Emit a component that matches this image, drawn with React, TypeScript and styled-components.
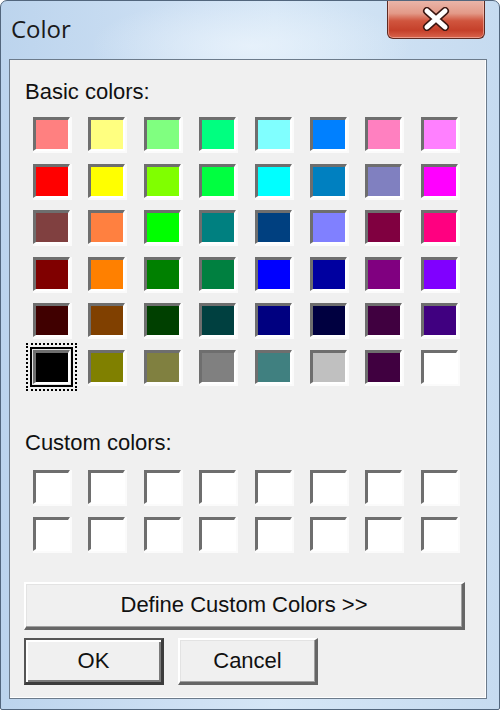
import styled, { createGlobalStyle } from 'styled-components';

const GlobalStyle = createGlobalStyle`
  html, body {
    margin: 0;
    padding: 0;
    background: #ffffff;
  }
`;

const BASIC_COLORS = [
  '#FF8080', '#FFFF80', '#80FF80', '#00FF80', '#80FFFF', '#0080FF', '#FF80C0', '#FF80FF',
  '#FF0000', '#FFFF00', '#80FF00', '#00FF40', '#00FFFF', '#0080C0', '#8080C0', '#FF00FF',
  '#804040', '#FF8040', '#00FF00', '#008080', '#004080', '#8080FF', '#800040', '#FF0080',
  '#800000', '#FF8000', '#008000', '#008040', '#0000FF', '#0000A0', '#800080', '#8000FF',
  '#400000', '#804000', '#004000', '#004040', '#000080', '#000040', '#400040', '#400080',
  '#000000', '#808000', '#808040', '#808080', '#408080', '#C0C0C0', '#400040', '#FFFFFF',
];

const SELECTED_INDEX = 40;

const Window = styled.div`
  box-sizing: border-box;
  width: 500px;
  height: 710px;
  display: flex;
  flex-direction: column;
  border: 1px solid #52667d;
  border-radius: 7px 7px 2px 2px;
  background:
    radial-gradient(ellipse 160px 50px at 250px 45px, rgba(235, 244, 252, 0.8), rgba(235, 244, 252, 0) 100%),
    linear-gradient(90deg, #bcd4ed 0%, #cfe1f4 40%, #d5e6f6 55%, #c6dbf0 100%);
  overflow: hidden;
`;

const TitleBar = styled.div`
  height: 58px;
  display: flex;
  justify-content: space-between;
  align-items: flex-start;
  padding-left: 10px;
`;

const Title = styled.div`
  margin-top: 12px;
  font-family: 'Open Sans', 'Noto Sans', sans-serif;
  font-size: 24px;
  line-height: 32px;
  color: #1b1b1b;
`;

const CloseButton = styled.div`
  box-sizing: border-box;
  width: 98px;
  height: 39px;
  margin-top: -1px;
  margin-right: 14px;
  display: flex;
  align-items: center;
  justify-content: center;
  border: 1px solid #5e2a22;
  border-top: none;
  border-radius: 0 0 6px 6px;
  background: linear-gradient(
    180deg,
    #eab7ab 0%,
    #e39a88 35%,
    #d0553e 55%,
    #c5402a 80%,
    #d8644c 100%
  );
  box-shadow: inset 0 0 0 1px rgba(255, 210, 200, 0.5);
`;

const Client = styled.div`
  flex: 1;
  display: flex;
  flex-direction: column;
  margin: 0 12px 10px 8px;
  padding: 19px 21px 0 14px;
  border: 1px solid #6c7b8b;
  background: #f0f0f0;
  box-shadow: inset -1px -1px 0 #ffffff;
  font-family: 'Liberation Sans', Arial, sans-serif;
  color: #111111;
`;

const Label = styled.div<{ $mt?: number }>`
  margin-top: ${({ $mt }) => $mt ?? 0}px;
  font-size: 22px;
  line-height: 26px;
  padding-left: 1px;
`;

const SwatchGrid = styled.div<{ $mt: number; $rowGap: number }>`
  display: grid;
  grid-template-columns: repeat(8, 37px);
  grid-auto-rows: 34px;
  column-gap: 18.4px;
  row-gap: ${({ $rowGap }) => $rowGap}px;
  margin: ${({ $mt }) => $mt}px 0 0 9px;
`;

const Swatch = styled.div<{ $color: string; $selected?: boolean }>`
  box-sizing: border-box;
  background: ${({ $color }) => $color};
  border-style: solid;
  border-width: 3px 2px 2px 3px;
  border-color: #6e6e6e #ffffff #ffffff #6e6e6e;
  box-shadow: ${({ $selected }) =>
    $selected ? '0 0 0 1px #e6e6e6, 0 0 0 3px #000000' : '1px 1px 0 1px #fbfbfb'};
  outline: ${({ $selected }) => ($selected ? '2px dotted #000000' : 'none')};
  outline-offset: 5px;
`;

const WideButton = styled.div`
  box-sizing: border-box;
  margin-top: 31px;
  height: 48px;
  display: flex;
  align-items: center;
  justify-content: center;
  font-size: 22px;
  background: #f0f0f0;
  border-style: solid;
  border-width: 2px 3px 3px 2px;
  border-color: #ffffff #666666 #666666 #ffffff;
  box-shadow: inset -1px -1px 0 #a0a0a0, inset 1px 1px 0 #e3e3e3;
`;

const ButtonRow = styled.div`
  display: flex;
  gap: 14px;
  margin-top: 8px;
`;

const PushButton = styled.div<{ $default?: boolean }>`
  box-sizing: border-box;
  width: 140px;
  height: 47px;
  display: flex;
  align-items: center;
  justify-content: center;
  font-size: 22px;
  background: #f0f0f0;
  border-style: solid;
  border-width: ${({ $default }) => ($default ? '2px 3px 3px 2px' : '2px 3px 3px 2px')};
  border-color: ${({ $default }) =>
    $default ? '#555555 #3c3c3c #3c3c3c #555555' : '#ffffff #666666 #666666 #ffffff'};
  box-shadow: ${({ $default }) =>
    $default
      ? 'inset 2px 2px 0 #ffffff, inset -2px -2px 0 #7a7a7a'
      : 'inset -1px -1px 0 #a0a0a0, inset 1px 1px 0 #e3e3e3'};
`;

function CloseGlyph() {
  return (
    <svg width="30" height="24" viewBox="0 0 30 24">
      <path d="M6 4 L24 20 M24 4 L6 20" stroke="#3b1712" strokeWidth="8" strokeLinecap="round" fill="none" />
      <path d="M6 4 L24 20 M24 4 L6 20" stroke="#ffffff" strokeWidth="5" strokeLinecap="round" fill="none" />
    </svg>
  );
}

export default function App() {
  return (
    <>
      <GlobalStyle />
      <Window>
        <TitleBar>
          <Title>Color</Title>
          <CloseButton>
            <CloseGlyph />
          </CloseButton>
        </TitleBar>

        <Client>
          <Label>Basic colors:</Label>
          <SwatchGrid $mt={12} $rowGap={12.6}>
            {BASIC_COLORS.map((color, i) => (
              <Swatch key={i} $color={color} $selected={i === SELECTED_INDEX} />
            ))}
          </SwatchGrid>

          <Label $mt={46}>Custom colors:</Label>
          <SwatchGrid $mt={14} $rowGap={13}>
            {Array.from({ length: 16 }).map((_, i) => (
              <Swatch key={i} $color="#ffffff" />
            ))}
          </SwatchGrid>

          <WideButton>Define Custom Colors &gt;&gt;</WideButton>

          <ButtonRow>
            <PushButton $default>OK</PushButton>
            <PushButton>Cancel</PushButton>
          </ButtonRow>
        </Client>
      </Window>
    </>
  );
}
